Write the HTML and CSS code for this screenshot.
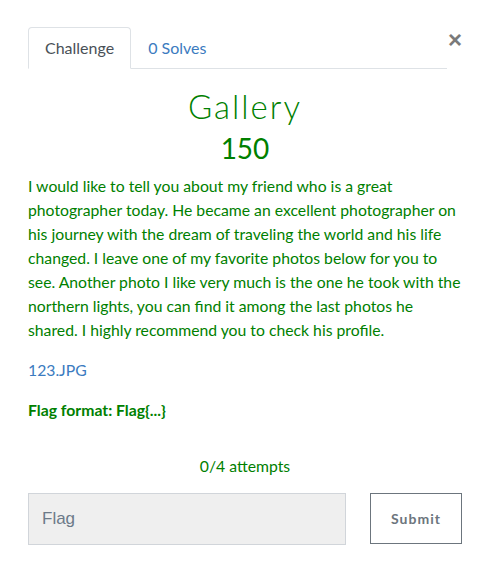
FILE: index.html
```html
<!DOCTYPE html>
<html>
<head>
<meta charset="utf-8">
<link rel="stylesheet" href="styles.css">
</head>
<body>
<div class="modal">
  <div class="head">
    <ul class="tabs">
      <li class="tab active">Challenge</li>
      <li class="tab"><a href="#">0 Solves</a></li>
    </ul>
    <button class="close" type="button">×</button>
  </div>
  <h2 class="name">Gallery</h2>
  <h3 class="value">150</h3>
  <div class="desc">
    <p>I would like to tell you about my friend who is a great photographer today. He became an excellent photographer on his journey with the dream of traveling the world and his life changed. I leave one of my favorite photos below for you to see. Another photo I like very much is the one he took with the northern lights, you can find it among the last photos he shared. I highly recommend you to check his profile.</p>
    <p><a href="#">123.JPG</a></p>
    <p><strong>Flag format: Flag{...}</strong></p>
  </div>
  <p class="attempts">0/4 attempts</p>
  <div class="submit-row">
    <input class="flag" type="text" placeholder="Flag">
    <button class="submit" type="button">Submit</button>
  </div>
</div>
</body>
</html>
```

FILE: styles.css
```css
html, body {
  margin: 0;
  padding: 0;
  background: #fff;
}
body {
  font-family: Lato, "Open Sans", sans-serif;
  font-size: 15.75px;
  line-height: 24px;
  color: #008000;
}
.modal {
  padding: 27px 28px 0 28px;
}
.head {
  display: flex;
  align-items: flex-start;
}
.tabs {
  list-style: none;
  margin: 0;
  padding: 0;
  display: flex;
  flex: 1;
  border-bottom: 1px solid #dee2e6;
  font-size: 16px;
}
.tab {
  padding: 8px 16px;
  border: 1px solid transparent;
  border-top-left-radius: 4px;
  border-top-right-radius: 4px;
  margin-bottom: -1px;
  color: #495057;
}
.tab.active {
  border-color: #dee2e6 #dee2e6 #fff;
  background: #fff;
}
.tab a, .desc a {
  color: #3b7bc0;
  text-decoration: none;
}
.close {
  background: none;
  border: 0;
  padding: 0;
  margin-top: 1px;
  font-family: "Liberation Sans", Arial, sans-serif;
  font-size: 24px;
  font-weight: bold;
  line-height: 24px;
  color: #7a7a7a;
  width: 15px;
  text-align: right;
}
.name {
  margin: 17px 0 0 0;
  text-align: center;
  font-weight: 300;
  font-size: 33px;
  line-height: 40px;
  letter-spacing: 2px;
}
.value {
  margin: 5px 0 0 0;
  text-align: center;
  font-weight: 400;
  font-size: 28px;
  line-height: 34px;
}
.desc {
  margin-top: 9px;
}
.desc p {
  margin: 0 0 16px 0;
}
.attempts {
  margin: 32px 0 15px 0;
  text-align: center;
}
.submit-row {
  display: flex;
  align-items: flex-start;
}
.flag {
  width: 318px;
  height: 52px;
  box-sizing: border-box;
  border: 1px solid #d1d5da;
  background: #efefef;
  padding: 0 13px;
  font-family: "Liberation Sans", Arial, sans-serif;
  font-size: 17px;
  color: #495057;
  outline: none;
}
.flag::placeholder {
  color: #6c7a89;
}
.submit {
  margin-left: auto;
  width: 92px;
  height: 51px;
  box-sizing: border-box;
  background: #fff;
  border: 1px solid #6c757d;
  color: #6c757d;
  font-family: Lato, sans-serif;
  font-weight: bold;
  font-size: 14px;
  letter-spacing: 1px;
}
```
